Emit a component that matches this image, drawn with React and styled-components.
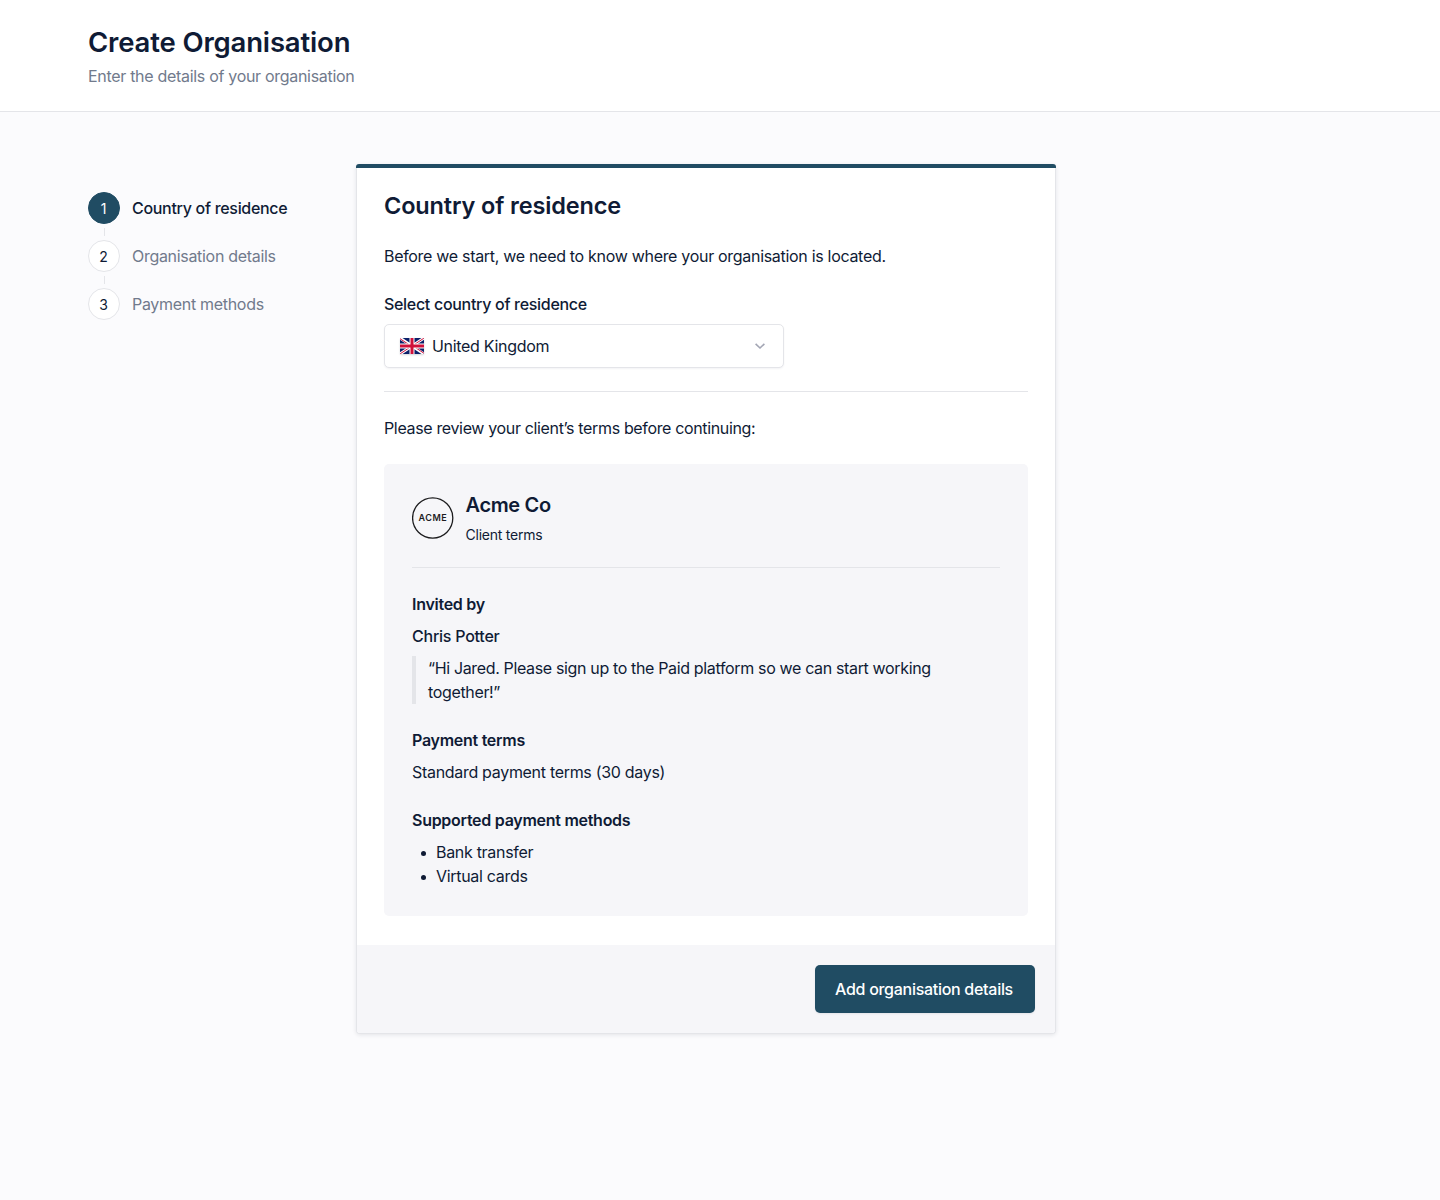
import React from "react";
import styled, { createGlobalStyle } from "styled-components";

const ink = "#0f1b35";
const teal = "#204c63";
const line = "#e4e5e9";
const muted = "#717a8c";
const tint = "#f6f6f9";

const GlobalStyle = createGlobalStyle`
  *, *::before, *::after { box-sizing: border-box; }
  body {
    margin: 0;
    background: #fbfbfd;
    color: ${ink};
    font-family: Inter, "Liberation Sans", sans-serif;
    font-size: 16px;
    line-height: 24px;
    letter-spacing: -0.305px;
    -webkit-font-smoothing: antialiased;
  }
  h1, h2, h3, h4, p, ul, ol, blockquote { margin: 0; padding: 0; }
`;

const Page = styled.div`
  min-height: 1200px;
`;

const Header = styled.header`
  height: 112px;
  padding: 24px 88px 0;
  background: #fff;
  border-bottom: 1px solid ${line};
`;

const PageTitle = styled.h1`
  margin-bottom: 4px;
  padding-top: 1px;
  font-size: 27.5px;
  font-weight: 600;
  line-height: 35px;
  letter-spacing: -0.16px;
`;

const Subtitle = styled.p`
  color: ${muted};
`;

const Main = styled.main`
  display: flex;
  align-items: flex-start;
  padding: 52px 88px 0;
`;

const Steps = styled.ol`
  width: 268px;
  padding-top: 28px;
  list-style: none;
`;

const Step = styled.li`
  display: flex;
  align-items: center;
  gap: 12px;
  height: 32px;
  color: ${(p) => (p.$active ? ink : muted)};
  font-weight: ${(p) => (p.$active ? 500 : 400)};
`;

const StepNumber = styled.span`
  display: flex;
  align-items: center;
  justify-content: center;
  width: 32px;
  height: 32px;
  padding-top: 1px;
  padding-right: 1px;
  border: 1px solid ${(p) => (p.$active ? teal : line)};
  border-radius: 50%;
  background: ${(p) => (p.$active ? teal : "#fff")};
  color: ${(p) => (p.$active ? "#fff" : ink)};
  font-size: 14px;
  font-weight: 400;
  letter-spacing: 0;
`;

const StepLink = styled.li`
  width: 1px;
  height: 8px;
  margin: 4px 0 4px 16px;
  background: ${line};
`;

const Card = styled.section`
  width: 700px;
  border: 1px solid ${line};
  border-top: 0;
  border-radius: 4px;
  background: #fff;
  box-shadow: 0 1px 4px rgba(15, 27, 53, 0.1);
`;

const CardAccent = styled.div`
  height: 4px;
  margin: 0 -1px;
  border-radius: 3px 3px 0 0;
  background: ${teal};
`;

const CardBody = styled.div`
  padding: 22px 27px 29px;
`;

const CardTitle = styled.h2`
  margin-bottom: 22px;
  font-size: 23.5px;
  font-weight: 600;
  line-height: 32px;
  letter-spacing: -0.14px;
`;

const Label = styled.div`
  margin: 24px 0 8px;
  font-weight: 500;
`;

const Select = styled.button`
  display: flex;
  align-items: center;
  width: 400px;
  height: 44px;
  padding: 0 15px;
  border: 1px solid ${line};
  border-radius: 5px;
  background: #fff;
  color: ${ink};
  font: inherit;
  letter-spacing: inherit;
  text-align: left;
  box-shadow: 0 1px 2px rgba(15, 27, 53, 0.05);
`;

const SelectValue = styled.span`
  flex: 1;
  margin-left: 8px;
`;

const Flag = styled.svg`
  display: block;
  width: 24px;
  height: 16px;
  border-radius: 1px;
  box-shadow: 0 1px 2px rgba(15, 27, 53, 0.18);
`;

const Chevron = styled.svg`
  width: 16px;
  height: 16px;
`;

const Divider = styled.div`
  height: 1px;
  margin: ${(p) => p.$margin};
  background: ${line};
`;

const Terms = styled.div`
  margin-top: 24px;
  padding: 27px 28px 28px;
  border-radius: 5px;
  background: ${tint};
`;

const Review = styled.p`
  letter-spacing: -0.35px;
`;

const Client = styled.div`
  display: flex;
  align-items: flex-start;
  gap: 11.5px;
`;

const Logo = styled.svg`
  width: 42px;
  height: 42px;
  margin-top: 6px;
`;

const ClientName = styled.h3`
  font-size: 20px;
  font-weight: 600;
  line-height: 28px;
  letter-spacing: -0.35px;
`;

const ClientNote = styled.p`
  margin-top: 4px;
  font-size: 14px;
  line-height: 24px;
  letter-spacing: -0.24px;
`;

const TermGroup = styled.div`
  display: flex;
  flex-direction: column;
  gap: 8px;
  margin-top: 24px;
`;

const TermTitle = styled.h4`
  font-size: 16px;
  font-weight: 600;
  letter-spacing: -0.275px;
`;

const Person = styled.p`
  font-weight: 500;
  letter-spacing: -0.24px;
`;

const Quote = styled.blockquote`
  padding-left: 12px;
  border-left: 4px solid ${line};
  letter-spacing: -0.35px;
`;

const Methods = styled.ul`
  list-style: none;
`;

const Method = styled.li`
  display: flex;
  align-items: center;

  &::before {
    content: "";
    width: 5px;
    height: 5px;
    margin: 2px 10px 0 9px;
    border-radius: 50%;
    background: ${ink};
  }
`;

const CardFooter = styled.footer`
  display: flex;
  justify-content: flex-end;
  padding: 20px;
  border-radius: 0 0 3px 3px;
  background: ${tint};
`;

const PrimaryButton = styled.button`
  width: 220px;
  height: 48px;
  padding: 0 2px 0 0;
  border: 0;
  border-radius: 5px;
  background: ${teal};
  color: #fff;
  font: inherit;
  font-weight: 500;
  letter-spacing: -0.285px;
  box-shadow: 0 1px 2px rgba(15, 27, 53, 0.08);
`;

const steps = ["Country of residence", "Organisation details", "Payment methods"];

function UnitedKingdomFlag() {
  return (
    <Flag viewBox="0 0 24 16" preserveAspectRatio="none">
      <path fill="#0b1f69" d="M0 0h24v16H0z" />
      <path stroke="#fff" strokeWidth="2.8" d="M0 0l24 16M24 0L0 16" />
      <path
        stroke="#d0103a"
        strokeWidth="1"
        d="M0 .7l9 6M24 15.3l-9-6M24 .1l-9 6M0 15.9l9-6"
      />
      <path stroke="#fff" strokeWidth="5" d="M12 0v16M0 8h24" />
      <path stroke="#d0103a" strokeWidth="3" d="M12 0v16M0 8h24" />
    </Flag>
  );
}

function AcmeLogo() {
  return (
    <Logo viewBox="0 0 42 42">
      <circle cx="20.7" cy="21" r="20.1" fill="none" stroke="#1c1c1e" strokeWidth="1.3" />
      <text
        x="6.4"
        y="24.3"
        textLength="28.8"
        fontFamily="Inter, sans-serif"
        fontSize="9"
        fontWeight="600"
        letterSpacing="0.4"
        fill="#1c1c1e"
      >
        ACME
      </text>
    </Logo>
  );
}

export default function App() {
  return (
    <Page>
      <GlobalStyle />
      <Header>
        <PageTitle>Create Organisation</PageTitle>
        <Subtitle>Enter the details of your organisation</Subtitle>
      </Header>
      <Main>
        <Steps>
          {steps.map((name, i) => (
            <React.Fragment key={name}>
              {i > 0 && <StepLink aria-hidden="true" />}
              <Step $active={i === 0}>
                <StepNumber $active={i === 0}>{i + 1}</StepNumber>
                {name}
              </Step>
            </React.Fragment>
          ))}
        </Steps>
        <Card>
          <CardAccent />
          <CardBody>
            <CardTitle>Country of residence</CardTitle>
            <p>Before we start, we need to know where your organisation is located.</p>
            <Label>Select country of residence</Label>
            <Select type="button">
              <UnitedKingdomFlag />
              <SelectValue>United Kingdom</SelectValue>
              <Chevron viewBox="0 0 16 16" fill="none" stroke="#a3a6b4" strokeWidth="1.6">
                <path d="M3.6 5.8L8 10l4.4-4.2" />
              </Chevron>
            </Select>
            <Divider $margin="23px 0 24px" />
            <Review>Please review your client’s terms before continuing:</Review>
            <Terms>
              <Client>
                <AcmeLogo />
                <div>
                  <ClientName>Acme Co</ClientName>
                  <ClientNote>Client terms</ClientNote>
                </div>
              </Client>
              <Divider $margin="20px 0 24px" />
              <TermGroup>
                <TermTitle>Invited by</TermTitle>
                <Person>Chris Potter</Person>
                <Quote>
                  “Hi Jared. Please sign up to the Paid platform so we can start working together!”
                </Quote>
              </TermGroup>
              <TermGroup>
                <TermTitle>Payment terms</TermTitle>
                <p>Standard payment terms (30 days)</p>
              </TermGroup>
              <TermGroup>
                <TermTitle>Supported payment methods</TermTitle>
                <Methods>
                  <Method>Bank transfer</Method>
                  <Method>Virtual cards</Method>
                </Methods>
              </TermGroup>
            </Terms>
          </CardBody>
          <CardFooter>
            <PrimaryButton type="button">Add organisation details</PrimaryButton>
          </CardFooter>
        </Card>
      </Main>
    </Page>
  );
}
